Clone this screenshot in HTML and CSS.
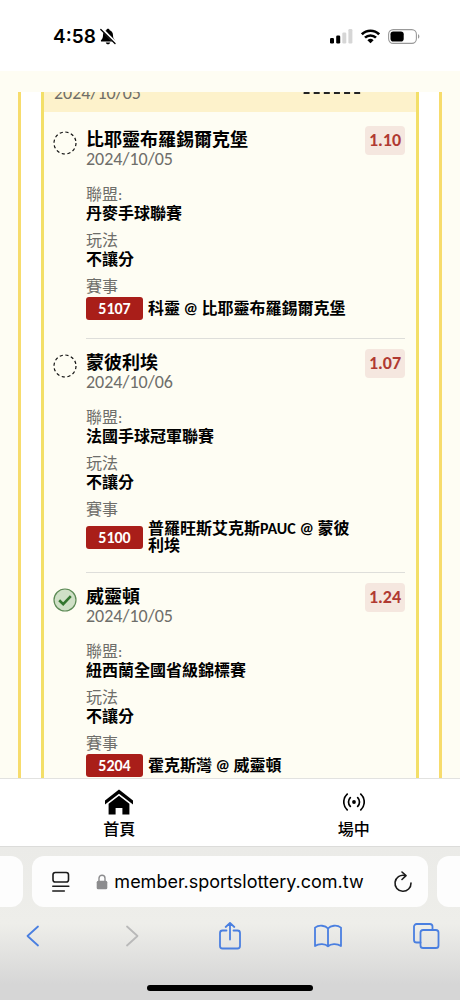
FILE: index.html
```html
<!DOCTYPE html>
<html lang="zh-Hant">
<head>
<meta charset="utf-8">
<meta name="viewport" content="width=device-width, initial-scale=1">
<title>member.sportslottery.com.tw</title>
<link rel="stylesheet" href="styles.css">
</head>
<body>
<header class="status">
  <div class="status-left">
    <span class="clock">4:58</span>
    <svg width="16" height="17" viewBox="0 0 16 17" aria-hidden="true">
      <path d="M8 .8c-.9 0-1.600.6-1.600 1.400C4 3 3 4.800 3 7.200c0 2.700-.8 3.700-1.800 4.700-.7.8-.3 1.700.6 1.700h12.400c.9 0 1.300-.9.6-1.700-1-1-1.800-2-1.800-4.700 0-2.400-1-4.200-3.400-5C9.600 1.400 8.900.8 8 .8zM5.800 14.400c.2 1.100 1.100 1.900 2.200 1.900s2-.8 2.200-1.900z" fill="#000"/>
      <path d="M1.500.8 15.500 15" stroke="#fff" stroke-width="3"/>
      <path d="M.8 1.500 15 15.500" stroke="#000" stroke-width="1.300" stroke-linecap="round"/>
    </svg>
  </div>
  <div class="status-right">
    <svg width="23" height="15" viewBox="0 0 23 15" aria-hidden="true">
      <rect x="0" y="9" width="4" height="5.500" rx="1.200"/>
      <rect x="6.200" y="6.500" width="4" height="8" rx="1.200"/>
      <rect x="12.300" y="3.500" width="4" height="11" rx="1.200" fill="#d6d6d6"/>
      <rect x="18.400" y="0" width="4" height="14.500" rx="1.200" fill="#d6d6d6"/>
    </svg>
    <svg width="19" height="15" viewBox="0 0 19 15" fill="none" stroke="#000" stroke-width="2.600" aria-hidden="true">
      <path d="M.9 5.300a12.300 12.300 0 0 1 17.200 0"/>
      <path d="M4 8.700a7.800 7.800 0 0 1 11 0"/>
      <path d="M9.500 14.300 6.400 11.300a4.500 4.500 0 0 1 6.200 0z" fill="#000" stroke="none"/>
    </svg>
    <svg width="32" height="15" viewBox="0 0 32 15" aria-hidden="true">
      <rect x=".6" y=".6" width="27.800" height="13.800" rx="4.600" fill="none" stroke="#999" stroke-width="1.100"/>
      <rect x="2.500" y="2.500" width="13.200" height="10" rx="2.800"/>
      <path d="M30 5.300c1.800.6 1.800 3.800 0 4.400z" fill="#999"/>
    </svg>
  </div>
</header>

<main class="page">
  <div class="scroll">
    <div class="frame">
      <section class="card">
        <div class="band">
          <span class="date">2024/10/05</span>
          <span class="stub"></span>
        </div>
        <article class="pick">
          <svg class="mark" viewBox="0 0 24 24" role="img" aria-label="未開獎"><circle cx="12" cy="12" r="11" fill="none" stroke="#111" stroke-width="1.200" stroke-dasharray="3.200 2.560"/></svg>
          <div class="body">
            <div class="info">
              <h2 class="team">比耶靈布羅錫爾克堡</h2>
              <div class="date">2024/10/05</div>
              <dl class="details">
                <div><dt>聯盟:</dt><dd>丹麥手球聯賽</dd></div>
                <div><dt>玩法</dt><dd>不讓分</dd></div>
                <div><dt>賽事</dt><dd class="event"><span class="code">5107</span><span class="match">科靈 @ 比耶靈布羅錫爾克堡</span></dd></div>
              </dl>
            </div>
            <span class="odds">1.10</span>
          </div>
        </article>
        <article class="pick">
          <svg class="mark" viewBox="0 0 24 24" role="img" aria-label="未開獎"><circle cx="12" cy="12" r="11" fill="none" stroke="#111" stroke-width="1.200" stroke-dasharray="3.200 2.560"/></svg>
          <div class="body">
            <div class="info">
              <h2 class="team">蒙彼利埃</h2>
              <div class="date">2024/10/06</div>
              <dl class="details">
                <div><dt>聯盟:</dt><dd>法國手球冠軍聯賽</dd></div>
                <div><dt>玩法</dt><dd>不讓分</dd></div>
                <div><dt>賽事</dt><dd class="event"><span class="code">5100</span><span class="match">普羅旺斯艾克斯PAUC @ 蒙彼利埃</span></dd></div>
              </dl>
            </div>
            <span class="odds">1.07</span>
          </div>
        </article>
        <article class="pick">
          <svg class="mark" viewBox="0 0 24 24" role="img" aria-label="過關"><circle cx="12" cy="12" r="11" fill="#cfe0c6" stroke="#5c8a55" stroke-width="1.200"/><path d="m6.200 12.300 4 3.900 7.600-8" fill="none" stroke="#33762f" stroke-width="2.600"/></svg>
          <div class="body">
            <div class="info">
              <h2 class="team">威靈頓</h2>
              <div class="date">2024/10/05</div>
              <dl class="details">
                <div><dt>聯盟:</dt><dd>紐西蘭全國省級錦標賽</dd></div>
                <div><dt>玩法</dt><dd>不讓分</dd></div>
                <div><dt>賽事</dt><dd class="event"><span class="code">5204</span><span class="match">霍克斯灣 @ 威靈頓</span></dd></div>
              </dl>
            </div>
            <span class="odds">1.24</span>
          </div>
        </article>
      </section>
    </div>
  </div>
</main>

<nav class="tabs">
  <div class="tab-row">
    <a class="tab" href="#home">
      <svg width="28" height="26" viewBox="0 0 28 26" aria-hidden="true">
        <path d="M14 .5 0 11.500v4L14 4.700 28 15.500v-4z"/>
        <path d="M14 6.800 3.600 14.800v10.700h7V19h6.800v6.500h7V14.800z"/>
      </svg>
      <span>首頁</span>
    </a>
    <a class="tab" href="#live">
      <svg width="22" height="26" viewBox="0 0 22 26" fill="none" stroke="#000" stroke-width="1.700" stroke-linecap="round" aria-hidden="true">
        <circle cx="11" cy="13" r="1.900" fill="#000" stroke="none"/>
        <path d="M7.300 8.600a6.300 6.300 0 0 0 0 8.800M14.700 8.600a6.300 6.300 0 0 1 0 8.800M4.200 5.200a10.600 10.600 0 0 0 0 15.600M17.800 5.200a10.600 10.600 0 0 1 0 15.600"/>
      </svg>
      <span>場中</span>
    </a>
  </div>
</nav>

<footer class="browser">
  <div class="bars">
    <span class="peek peek-left"></span>
    <div class="bar">
      <button class="icon" type="button" aria-label="網頁選單">
        <svg width="20" height="22" viewBox="0 0 20 22" fill="none" stroke="#1b1b1b" stroke-width="1.600" stroke-linecap="round"><rect x="2" y="1.500" width="15.500" height="9.500" rx="2.300"/><path d="M1.800 15.200h16M1.800 20h11.500"/></svg>
      </button>
      <button class="address" type="button">
        <svg width="12" height="16" viewBox="0 0 12 16" aria-hidden="true"><rect x=".7" y="6.800" width="10.600" height="8.400" rx="1.500" fill="#8c8c8e"/><path d="M3 7.500V4.200a3 3 0 0 1 6 0v3.300" fill="none" stroke="#8c8c8e" stroke-width="1.400"/></svg>
        <span>member.sportslottery.com.tw</span>
      </button>
      <button class="icon" type="button" aria-label="重新載入">
        <svg width="20" height="22" viewBox="0 0 20 22" fill="none" stroke="#1b1b1b" stroke-width="1.600" stroke-linecap="round" stroke-linejoin="round"><path d="M11.800 4.500A8 8 0 1 0 18 12"/><path d="m9 1 4 3.700-4 3.800"/></svg>
      </button>
    </div>
    <span class="peek peek-right"></span>
  </div>
  <div class="tools">
    <button class="tool" type="button" aria-label="上一頁"><svg width="28" height="28" viewBox="0 0 28 28"><path d="M19 4.500 8.500 14 19 23.500"/></svg></button>
    <button class="tool tool-off" type="button" aria-label="下一頁" disabled><svg width="28" height="28" viewBox="0 0 28 28"><path d="M10 4.500 20.500 14 10 23.500"/></svg></button>
    <button class="tool" type="button" aria-label="分享"><svg width="28" height="28" viewBox="0 0 28 28"><path d="M10.500 8.500H6.500a2.500 2.500 0 0 0-2.500 2.500v13a2.500 2.500 0 0 0 2.500 2.500h15a2.500 2.500 0 0 0 2.500-2.500V11a2.500 2.500 0 0 0-2.500-2.500h-4M14 17.500V1M9.700 5 14 .9 18.300 5"/></svg></button>
    <button class="tool" type="button" aria-label="書籤"><svg width="28" height="28" viewBox="0 0 28 28"><path d="M14 6.500C11.500 3.400 5 2.600 1 5.600V24c4-2.800 10.500-2.300 13 .3 2.500-2.600 9-3.100 13-.3V5.600C23 2.600 16.500 3.400 14 6.500zM14 6.500v17.800"/></svg></button>
    <button class="tool" type="button" aria-label="分頁"><svg width="28" height="28" viewBox="0 0 28 28"><rect x="8.500" y="8" width="18" height="18" rx="2.600"/><path d="M8.500 20.500H4.600A2.600 2.600 0 0 1 2 17.900V4.600A2.600 2.600 0 0 1 4.600 2h13.300a2.600 2.600 0 0 1 2.600 2.600V8"/></svg></button>
  </div>
  <div class="grip"></div>
</footer>
</body>
</html>
```

FILE: styles.css
```css
* {
  box-sizing: border-box;
}

body {
  display: flex;
  flex-direction: column;
  height: 100vh;
  margin: 0;
  overflow: hidden;
  background: #fff;
  color: #000;
  font-family: Carlito, Lato, "Noto Sans CJK TC", sans-serif;
  font-size: 16px;
}

button {
  padding: 0;
  border: 0;
  background: none;
  color: inherit;
}

svg {
  display: block;
  flex: none;
}

.status {
  display: flex;
  justify-content: space-between;
  align-items: center;
  padding: 25px 40px 23px 53px;
}

.status-left,
.status-right {
  display: flex;
  align-items: center;
}

.status-left {
  gap: 4px;
}

.status-right {
  gap: 8px;
}

.clock {
  font-family: Inter, sans-serif;
  font-size: 19px;
  font-weight: 600;
  line-height: 23px;
}

.page {
  display: flex;
  flex: 1 1 0;
  flex-direction: column;
  min-height: 0;
  padding-top: 21px;
  background: #fefdf3;
}

.scroll {
  flex: 1 1 0;
  min-height: 0;
  overflow: hidden;
  padding: 0 18px;
}

.frame {
  padding: 0 20px;
  border: solid #f7dc6c;
  border-width: 0 3px;
  background: #fff;
}

.card {
  border: solid #f3df68;
  border-width: 0 3px;
  background: #fefdf3;
}

.band {
  display: flex;
  justify-content: space-between;
  align-items: flex-end;
  height: 40px;
  margin: -20px 0 4px;
  padding: 0 52px 10px 10px;
  background: #fdf2cb;
}

.stub {
  width: 64px;
  height: 24px;
  margin-bottom: 8px;
  border: 2px dashed #222;
  border-radius: 4px;
}

.pick {
  display: flex;
  gap: 9px;
  padding: 0 11px 0 9px;
}

.mark {
  width: 24px;
  height: 24px;
  margin-top: 15px;
}

.body {
  display: flex;
  flex: 1;
  justify-content: space-between;
  align-items: flex-start;
  padding: 10px 0 18px;
  border-bottom: 1px solid #dededa;
}

.info {
  flex: 1;
  padding-top: 4px;
}

.team {
  margin: 0;
  font-size: 18px;
  font-weight: 700;
  line-height: 20px;
}

.date {
  color: #6e6e6a;
  font-size: 18px;
  line-height: 18px;
}

.details {
  display: grid;
  gap: 8px;
  margin: 17px 0 0;
  line-height: 19px;
}

.details dt {
  color: #6e6e6a;
}

.details dd {
  margin: 0;
  font-weight: 700;
}

.details .event {
  display: flex;
  align-items: center;
  gap: 5px;
  padding-top: 1px;
}

.code {
  flex: none;
  width: 57px;
  border-radius: 3px;
  background: #a91e19;
  color: #fff;
  line-height: 23px;
  text-align: center;
}

.match {
  line-height: 17px;
}

.odds {
  width: 40px;
  border-radius: 4px;
  background: #f5e7df;
  color: #b03a32;
  font-size: 18px;
  font-weight: 700;
  line-height: 29px;
  text-align: center;
}

.tabs {
  border-top: 1px solid #e2e2e0;
  background: #fff;
}

.tab-row {
  display: grid;
  grid-template-columns: 1fr 1fr;
  margin: 0 -11px 0 2px;
  padding: 10px 0 6px;
}

.tab {
  display: flex;
  flex-direction: column;
  align-items: center;
  gap: 5px;
  color: #000;
  font-weight: 500;
  line-height: 20px;
  text-decoration: none;
}

.browser {
  border-top: 1px solid #dcdcda;
  background: linear-gradient(#ebebe8, #eeeeea 50%, #d6d6d6 90%);
}

.bars {
  display: flex;
  gap: 9px;
  padding-top: 9px;
}

.peek {
  width: 23px;
  background: #fdfdfd;
}

.peek-left {
  border-radius: 0 12px 12px 0;
}

.peek-right {
  border-radius: 12px 0 0 12px;
}

.bar {
  display: flex;
  flex: 1;
  justify-content: space-between;
  align-items: center;
  height: 51px;
  padding: 0 15px 0 19px;
  border-radius: 12px;
  background: #fdfdfd;
}

.address {
  display: flex;
  align-items: center;
  gap: 6px;
  padding-right: 4px;
  font-family: Inter, sans-serif;
  font-size: 18px;
  line-height: 24px;
}

.tools {
  display: flex;
  justify-content: space-between;
  padding: 15px 20px 0 19px;
}

.tool svg {
  fill: none;
  stroke: #4a7fe0;
  stroke-width: 1.8;
  stroke-linecap: round;
  stroke-linejoin: round;
}

.tool-off svg {
  stroke: #b9b9b9;
}

.grip {
  width: 36%;
  height: 6px;
  margin: 35px auto 9px;
  border-radius: 3px;
  background: #000;
}
```
